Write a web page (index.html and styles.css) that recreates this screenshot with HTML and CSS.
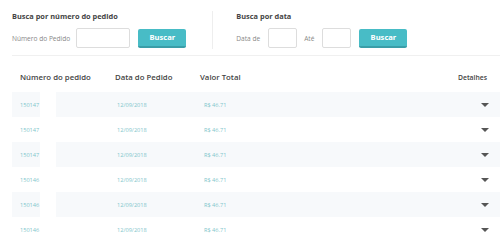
FILE: index.html
```html
<!DOCTYPE html>
<html lang="pt-BR">

<head>
    <meta charset="UTF-8">
    <meta name="viewport" content="width=device-width, initial-scale=1.0">
    <title>Meus Pedidos</title>
    <link rel="stylesheet" href="styles.css">
</head>

<body>
    <div class="busca">
        <div class="busca-bloco busca-numero">
            <div class="busca-titulo">Busca por número do pedido</div>
            <div class="busca-campos">
                <label class="busca-label">Número do Pedido</label>
                <input class="campo campo-pedido" type="text">
                <button class="btn-buscar">Buscar</button>
            </div>
        </div>
        <div class="busca-bloco busca-data">
            <div class="busca-titulo">Busca por data</div>
            <div class="busca-campos">
                <label class="busca-label">Data de</label>
                <input class="campo campo-data" type="text">
                <label class="busca-label">Até</label>
                <input class="campo campo-data" type="text">
                <button class="btn-buscar">Buscar</button>
            </div>
        </div>
    </div>

    <div class="tabela">
        <div class="tabela-cabecalho">
            <div class="col-numero">Número do pedido</div>
            <div class="col-data">Data do Pedido</div>
            <div class="col-valor">Valor Total</div>
            <div class="col-detalhes">Detalhes</div>
        </div>
        <div id="listaPedidos"></div>
    </div>

    <script>
        // Lista de pedidos
        const pedidos = [
            { numero: '150147', data: '12/09/2018', valor: 'R$ 46.71' },
            { numero: '150147', data: '12/09/2018', valor: 'R$ 46.71' },
            { numero: '150147', data: '12/09/2018', valor: 'R$ 46.71' },
            { numero: '150146', data: '12/09/2018', valor: 'R$ 46.71' },
            { numero: '150146', data: '12/09/2018', valor: 'R$ 46.71' },
            { numero: '150146', data: '12/09/2018', valor: 'R$ 46.71' }
        ];

        const lista = document.getElementById('listaPedidos');
        pedidos.forEach(pedido => {
            const linha = document.createElement('div');
            linha.className = 'linha';
            linha.innerHTML = `
                <div class="cel-numero">${pedido.numero}</div>
                <div class="cel-vazia"></div>
                <div class="cel-data">${pedido.data}</div>
                <div class="cel-valor">${pedido.valor}</div>
                <div class="cel-detalhes"><span class="seta"></span></div>
            `;
            lista.appendChild(linha);
        });
    </script>
</body>

</html>
```

FILE: styles.css
```css
body {
    font-family: "Open Sans", Arial, sans-serif;
    background-color: #fff;
    color: #444;
    margin: 0;
    padding: 0 0 0 12px;
}

.busca {
    display: flex;
    padding-top: 11px;
    padding-bottom: 6px;
    border-bottom: 1px solid #f0f0f0;
}

.busca-bloco {
    display: flex;
    flex-direction: column;
    gap: 6px;
}

.busca-numero {
    padding-right: 26px;
    border-right: 1px solid #eee;
}

.busca-data {
    padding-left: 23px;
}

.busca-titulo {
    font-size: 7.4px;
    font-weight: 700;
    color: #444;
    line-height: 11px;
}

.busca-campos {
    display: flex;
    align-items: center;
    padding-bottom: 1px;
}

.busca-label {
    font-size: 6.6px;
    color: #888;
    margin-right: 6px;
}

.busca-data .busca-label {
    margin-right: 8px;
}

.campo {
    height: 20px;
    box-sizing: border-box;
    border: 1px solid #ddd;
    border-radius: 2px;
    background-color: #fff;
    margin: 0 8px 0 0;
    padding: 0;
}

.campo-pedido {
    width: 54px;
}

.campo-data {
    width: 29px;
    margin-right: 7px;
}

.busca-data .btn-buscar {
    margin-left: 1px;
}

.btn-buscar {
    width: 48px;
    height: 19px;
    padding: 0;
    border: none;
    border-bottom: 2px solid #3a9ea8;
    border-radius: 2px;
    background-color: #48bcc6;
    color: #fff;
    font-family: "Noto Sans", Arial, sans-serif;
    font-size: 7.6px;
    font-weight: 700;
}

.tabela-cabecalho {
    display: grid;
    grid-template-columns: 95px 85px 1fr auto;
    align-items: center;
    height: 30px;
    padding: 6px 13px 0 8px;
    font-size: 7.8px;
    font-weight: 600;
    color: #444;
}

.col-detalhes {
    font-size: 6.8px;
}

.linha {
    display: grid;
    grid-template-columns: 28px 16px 148px 1fr auto;
    align-items: stretch;
    height: 25px;
    font-size: 5.6px;
    color: #7fc6cb;
    background-color: #f7f9fb;
}

.linha:nth-child(even) {
    background-color: #fff;
}

.linha > div {
    display: flex;
    align-items: center;
}

.cel-numero {
    padding-left: 8px;
    white-space: nowrap;
}

.cel-vazia {
    background-color: #fff;
}

.cel-data {
    padding-left: 61px;
}

.cel-detalhes {
    padding-right: 11px;
}

.seta {
    width: 0;
    height: 0;
    border-left: 4.5px solid transparent;
    border-right: 4.5px solid transparent;
    border-top: 4px solid #555;
}
```
